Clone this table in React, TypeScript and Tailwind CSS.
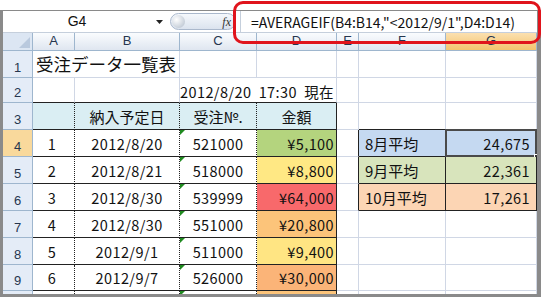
import React from "react";

const JP = "font-['Noto_Sans_CJK_JP','Noto_Sans',sans-serif]";
const GRID = "border-[#d0d7e5]";

type CellProps = {
  className?: string;
  children?: React.ReactNode;
};

function Cell({ className = "", children }: CellProps) {
  return <div className={`relative flex items-end pb-[2px] leading-[20px] ${className}`}>{children}</div>;
}

function Tri() {
  return <div className="absolute left-0 top-0 w-[5px] h-[5px] bg-[#1f8a1f] [clip-path:polygon(0_0,100%_0,0_100%)]" />;
}

const rows = [
  { n: "1", date: "2012/8/20", no: "521000", amt: "¥5,100", bg: "bg-[#b4d47e]" },
  { n: "2", date: "2012/8/21", no: "518000", amt: "¥8,800", bg: "bg-[#ffe884]" },
  { n: "3", date: "2012/8/30", no: "539999", amt: "¥64,000", bg: "bg-[#f8696b]" },
  { n: "4", date: "2012/8/30", no: "551000", amt: "¥20,800", bg: "bg-[#fcc47a]" },
  { n: "5", date: "2012/9/1", no: "511000", amt: "¥9,400", bg: "bg-[#ffe583]" },
  { n: "6", date: "2012/9/7", no: "526000", amt: "¥30,000", bg: "bg-[#fbb478]" },
];

const side = [
  { label: "8月平均", val: "24,675", bg: "bg-[#c5d9f1]" },
  { label: "9月平均", val: "22,361", bg: "bg-[#d8e4bc]" },
  { label: "10月平均", val: "17,261", bg: "bg-[#fcd5b4]" },
];

const COLS = ["A", "B", "C", "D", "E", "F", "G"];

export default function App() {
  const rowHdr = (n: string, active = false) => (
    <div
      className={`flex items-end justify-center pb-[1px] leading-[16px] text-[13px] text-[#26364f] border-r border-b border-[#9eb6ce] font-['Liberation_Sans',sans-serif] ${
        active ? "bg-[#f9d99c]" : "bg-[#e4ecf7]"
      }`}
    >
      {n}
    </div>
  );

  const num = `text-[14.5px] tracking-[0.4px] text-[#111] ${JP}`;
  const cells: React.ReactNode[] = [];

  // header row
  cells.push(
    <div key="corner" className="relative bg-[#dce6f3] border-r border-b border-[#9eb6ce]">
      <svg className="absolute right-[2px] bottom-[2px]" width="11" height="11" viewBox="0 0 11 11">
        <polygon points="11,0 11,11 0,11" fill="#b9c9de" />
      </svg>
    </div>
  );
  COLS.forEach((c) =>
    cells.push(
      <div
        key={"h" + c}
        className={`flex items-end justify-center pb-[1px] text-[13px] leading-[16px] text-[#26364f] border-r border-b border-[#9eb6ce] font-['Liberation_Sans',sans-serif] ${
          c === "G"
            ? "bg-[linear-gradient(#fbe0b0,#f3c46e)]"
            : "bg-[linear-gradient(#fafcfe,#dfe6f0)]"
        }`}
      >
        {c}
      </div>
    )
  );

  // row 1
  cells.push(<React.Fragment key="r1h">{rowHdr("1")}</React.Fragment>);
  cells.push(
    <Cell key="a1" className={`border-b ${GRID} z-10`}>
      <span className={`pl-[3px] whitespace-nowrap text-[17.5px] leading-[22px] text-[#111] ${JP}`}>受注データ一覧表</span>
    </Cell>
  );
  cells.push(<Cell key="b1" className={`border-r border-b ${GRID}`} />);
  ["c1", "d1", "e1", "f1", "g1"].forEach((k) => cells.push(<Cell key={k} className={`border-r border-b ${GRID}`} />));

  // row 2
  cells.push(<React.Fragment key="r2h">{rowHdr("2")}</React.Fragment>);
  cells.push(<Cell key="a2" className={`border-r ${GRID} border-b-[#222] border-b`} />);
  cells.push(<Cell key="b2" className={`border-r ${GRID} border-b-[#222] border-b`} />);
  cells.push(<Cell key="c2" className="border-b border-b-[#222]" />);
  cells.push(
    <Cell key="d2" className={`justify-end pr-[2px] !pb-0 border-r ${GRID} border-b border-b-[#222]`}>
      <span className={`whitespace-pre ${num}`}>2012/8/20  17:30  現在</span>
    </Cell>
  );
  ["e2", "f2", "g2"].forEach((k) => cells.push(<Cell key={k} className={`border-r border-b ${GRID}`} />));

  // row 3
  const dotR = "border-r border-[#222] [border-right-style:dotted]";
  cells.push(<React.Fragment key="r3h">{rowHdr("3")}</React.Fragment>);
  cells.push(<Cell key="a3" className={`bg-[#daeef3] ${dotR} border-b border-b-[#222] [border-bottom-style:solid]`} />);
  cells.push(
    <Cell key="b3" className={`bg-[#daeef3] justify-center ${dotR} border-b border-b-[#222] [border-bottom-style:solid]`}>
      <span className={`text-[15px] text-[#111] ${JP}`}>納入予定日</span>
    </Cell>
  );
  cells.push(
    <Cell key="c3" className={`bg-[#daeef3] justify-center ${dotR} border-b border-b-[#222] [border-bottom-style:solid]`}>
      <span className={`text-[15px] text-[#111] ${JP}`}>受注№.</span>
    </Cell>
  );
  cells.push(
    <Cell key="d3" className="bg-[#daeef3] justify-center border-r border-b border-[#222]">
      <span className={`text-[15px] text-[#111] ${JP}`}>金額</span>
    </Cell>
  );
  cells.push(<Cell key="e3" className={`border-r border-b ${GRID}`} />);
  cells.push(<Cell key="f3" className="border-r border-r-[#d0d7e5] border-b border-b-[#222]" />);
  cells.push(<Cell key="g3" className="border-r border-r-[#d0d7e5] border-b border-b-[#222]" />);

  // rows 4-9
  rows.forEach((r, i) => {
    const rn = i + 4;
    const s = side[i];
    cells.push(<React.Fragment key={"rh" + rn}>{rowHdr(String(rn), rn === 4)}</React.Fragment>);
    cells.push(
      <Cell key={"a" + rn} className={`justify-center pr-[3px] ${dotR} border-b border-b-[#222] [border-bottom-style:solid]`}>
        <span className={num}>{r.n}</span>
      </Cell>
    );
    cells.push(
      <Cell key={"b" + rn} className={`justify-center ${dotR} border-b border-b-[#222] [border-bottom-style:solid]`}>
        <span className={num}>{r.date}</span>
      </Cell>
    );
    cells.push(
      <Cell key={"c" + rn} className={`justify-center ${dotR} border-b border-b-[#222] [border-bottom-style:solid]`}>
        <Tri />
        <span className={num}>{r.no}</span>
      </Cell>
    );
    cells.push(
      <Cell key={"d" + rn} className={`${r.bg} justify-end pr-[2px] border-r border-b border-[#222]`}>
        <span className={num}>{r.amt}</span>
      </Cell>
    );
    cells.push(
      <Cell key={"e" + rn} className={`border-b ${GRID} border-r ${i < 3 ? "border-r-[#222]" : "border-r-[#d0d7e5]"}`} />
    );
    if (i < 3) {
      cells.push(
        <Cell key={"f" + rn} className={`${s.bg} pl-[6px] border-r border-b border-[#222]`}>
          <span className={`text-[15px] text-[#111] ${JP}`}>{s.label}</span>
        </Cell>
      );
      cells.push(
        <Cell key={"g" + rn} className={`${s.bg} justify-end pr-[6px] border-r border-b border-[#222]`}>
          {i === 0 && (
            <>
              <div className="absolute left-[-1px] top-[-1px] right-[-1px] bottom-[-1px] border-2 border-[#4a4a4a]" />
              <div className="absolute right-[-3px] bottom-[-3px] w-[5px] h-[5px] bg-[#333] border border-white" />
            </>
          )}
          <span className={num}>{s.val}</span>
        </Cell>
      );
    } else {
      cells.push(<Cell key={"f" + rn} className={`border-r border-b ${GRID}`} />);
      cells.push(<Cell key={"g" + rn} className={`border-r border-b ${GRID}`} />);
    }
  });

  // row 10 partial
  cells.push(<div key="r10h" className="bg-[#e4ecf7] border-r border-[#9eb6ce]" />);
  cells.push(<div key="a10" className={dotR} />);
  cells.push(<div key="b10" className={dotR} />);
  cells.push(
    <div key="c10" className={`relative ${dotR}`}>
      <Tri />
    </div>
  );
  cells.push(<div key="d10" className="border-r border-[#222] bg-[#fcc47a]" />);
  ["e10", "f10", "g10"].forEach((k) => cells.push(<div key={k} className={`border-r ${GRID}`} />));

  return (
    <div className={`relative w-[544px] h-[299px] bg-white overflow-hidden ${JP}`}>
      <div className="mt-[10px] w-[541px] h-[287px] flex flex-col border-[#8a8a8a] border-l-[3px] border-t border-r-[4px] border-b-[3px]">
        {/* formula bar */}
        <div className="h-[22px] flex items-stretch bg-white border-b border-[#c5cfdc]">
          <div className="w-[148px] flex items-center justify-center text-[14px] text-[#111] font-['Liberation_Sans',sans-serif]">
            G4
          </div>
          <div className="w-[17px] flex items-center justify-center">
            <svg width="7" height="4" viewBox="0 0 7 4">
              <polygon points="0,0 7,0 3.5,4" fill="#222" />
            </svg>
          </div>
          <div className="w-[72px] flex items-center pl-[2px]">
            <div className="relative h-[17px] w-[66px] rounded-full border border-[#aab8cc] bg-[linear-gradient(#f5f8fc,#dbe3ee)] flex items-center justify-end pr-[4px]">
              <div className="absolute left-[1px] top-[1px] w-[13px] h-[13px] rounded-full bg-[radial-gradient(circle_at_35%_35%,#ffffff,#c8d0da_70%,#9aa6b6)]" />
              <span className="italic text-[12px] text-[#333] font-['Liberation_Serif',serif]">fx</span>
            </div>
          </div>
          <div className="flex-1 flex items-center pt-[2px] pl-[10px] border-l border-[#c5cfdc] text-[14px] text-[#111] whitespace-nowrap">
            =AVERAGEIF(B4:B14,"&lt;2012/9/1",D4:D14)
          </div>
        </div>
        {/* grid */}
        <div className="grid grid-cols-[30px_42px_105px_77px_80px_22px_87px_91px] grid-rows-[18px_27px_25px_27px_27px_27px_27px_27px_27px_26px_3px] overflow-hidden">
          {cells}
        </div>
      </div>
      {/* annotation */}
      <div className="absolute left-[233px] top-[1px] w-[308px] h-[43px] rounded-[10px] border-[3px] border-[#e0141c]" />
    </div>
  );
}
